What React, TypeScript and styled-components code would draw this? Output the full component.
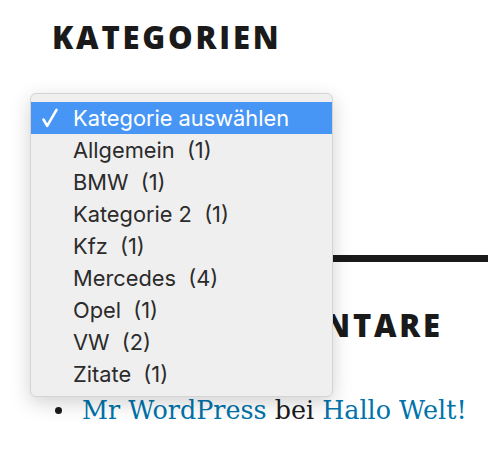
import React from "react";
import styled, { createGlobalStyle } from "styled-components";

const GlobalStyle = createGlobalStyle`
	html, body {
		margin: 0;
		padding: 0;
		background: #fff;
	}
`;

const Page = styled.div`
	position: relative;
	width: 488px;
	height: 454px;
	overflow: hidden;
	padding: 0 0 0 52px;
	box-sizing: border-box;
`;

const Widget = styled.section<{ $rule?: boolean }>`
	border-top: ${(p) => (p.$rule ? "7px solid #1a1a1a" : "none")};
	margin-right: -40px;
`;

const WidgetTitle = styled.h2`
	margin: 0;
	font-family: "Open Sans", sans-serif;
	font-weight: 800;
	font-size: 31px;
	line-height: 1;
	letter-spacing: 2.8px;
	color: #1a1a1a;
	text-transform: uppercase;
`;

const FirstTitle = styled(WidgetTitle)`
	padding-top: 22px;
`;

const SelectSlot = styled.div`
	height: 202px;
`;

const SecondTitle = styled(WidgetTitle)`
	padding-top: 48px;
`;

const CommentList = styled.ul`
	margin: 0;
	padding: 54px 0 0 2px;
	list-style: none;
	font-family: "DejaVu Serif", serif;
	font-size: 25.4px;
	line-height: 1.2;
	color: #1a1a1a;
`;

const CommentItem = styled.li`
	display: flex;
	align-items: center;
	white-space: nowrap;
`;

const Bullet = styled.span`
	display: flex;
	align-items: center;
	width: 28px;
	&::before {
		content: "";
		width: 7px;
		height: 7px;
		margin-left: 1px;
		border-radius: 50%;
		background: #1a1a1a;
	}
`;

const Link = styled.a`
	color: #0073aa;
	text-decoration: none;
`;

const Menu = styled.ul`
	position: absolute;
	left: 30px;
	top: 93px;
	width: 303px;
	height: 304px;
	box-sizing: border-box;
	margin: 0;
	padding: 8px 0 0;
	list-style: none;
	background: #efefef;
	border: 1px solid #d4d4d4;
	border-radius: 6px;
	box-shadow: 0 6px 20px rgba(0, 0, 0, 0.18);
	font-family: Inter, "Open Sans", sans-serif;
	font-size: 21.8px;
	color: #2b2b2b;
`;

const Option = styled.li<{ $selected?: boolean }>`
	display: flex;
	align-items: center;
	height: 32px;
	padding-left: 11px;
	white-space: pre;
	background: ${(p) => (p.$selected ? "#4796f6" : "transparent")};
	color: ${(p) => (p.$selected ? "#fff" : "inherit")};
`;

const CheckSlot = styled.span`
	display: flex;
	align-items: center;
	width: 31px;
`;

const CheckMark = () => (
	<svg width="16" height="20" viewBox="0 0 16 20">
		<path
			d="M1.5 11.5 L5.2 17.8 L14.5 1.8"
			fill="none"
			stroke="#fff"
			strokeWidth="2.6"
			strokeLinecap="round"
			strokeLinejoin="round"
		/>
	</svg>
);

const options = [
	"Allgemein  (1)",
	"BMW  (1)",
	"Kategorie 2  (1)",
	"Kfz  (1)",
	"Mercedes  (4)",
	"Opel  (1)",
	"VW  (2)",
	"Zitate  (1)",
];

const App = () => {
	return (
		<Page>
			<GlobalStyle />
			<Widget>
				<FirstTitle>Kategorien</FirstTitle>
				<SelectSlot />
			</Widget>
			<Widget $rule>
				<SecondTitle>Letzte Kommentare</SecondTitle>
				<CommentList>
					<CommentItem>
						<Bullet />
						<span>
							<Link href="#">Mr WordPress</Link> bei <Link href="#">Hallo Welt!</Link>
						</span>
					</CommentItem>
				</CommentList>
			</Widget>
			<Menu>
				<Option $selected>
					<CheckSlot>
						<CheckMark />
					</CheckSlot>
					Kategorie auswählen
				</Option>
				{options.map((o) => (
					<Option key={o}>
						<CheckSlot />
						{o}
					</Option>
				))}
			</Menu>
		</Page>
	);
};

export default App;
